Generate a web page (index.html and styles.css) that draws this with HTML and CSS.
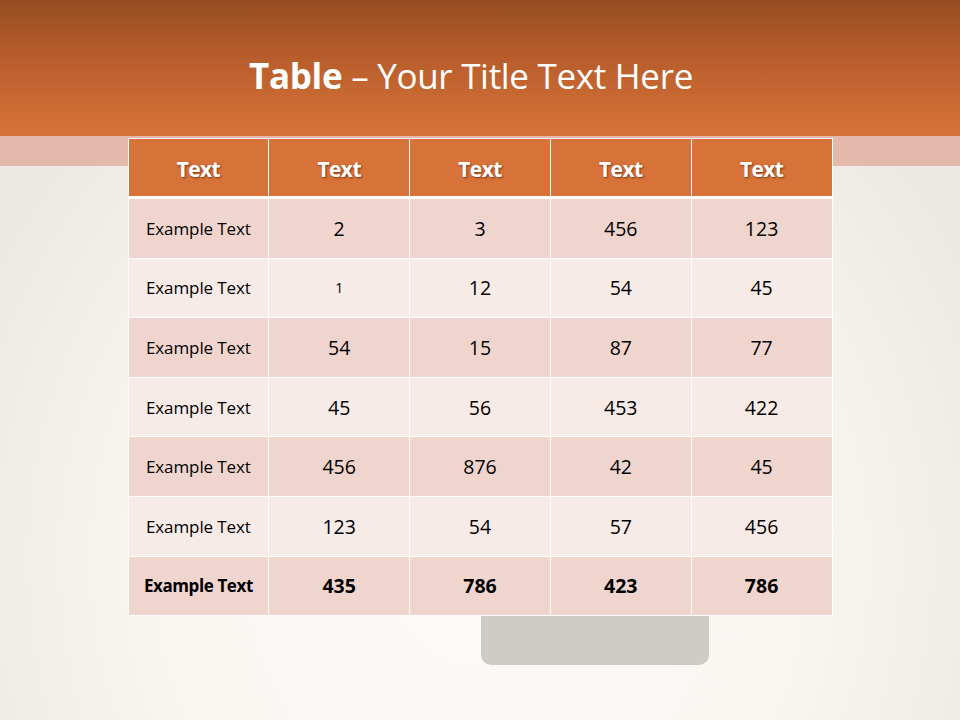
FILE: index.html
```html
<!DOCTYPE html>
<html>
<head>
<meta charset="utf-8">
<link rel="stylesheet" href="styles.css">
</head>
<body>
<div class="slide">
  <header class="title-area">
    <h1 class="title"><b>Table</b> – Your Title Text Here</h1>
  </header>
  <table class="data">
    <thead>
      <tr><th>Text</th><th>Text</th><th>Text</th><th>Text</th><th>Text</th></tr>
    </thead>
    <tbody>
      <tr class="odd"><td class="lbl">Example Text</td><td>2</td><td>3</td><td>456</td><td>123</td></tr>
      <tr class="even"><td class="lbl">Example Text</td><td class="small">1</td><td>12</td><td>54</td><td>45</td></tr>
      <tr class="odd"><td class="lbl">Example Text</td><td>54</td><td>15</td><td>87</td><td>77</td></tr>
      <tr class="even"><td class="lbl">Example Text</td><td>45</td><td>56</td><td>453</td><td>422</td></tr>
      <tr class="odd"><td class="lbl">Example Text</td><td>456</td><td>876</td><td>42</td><td>45</td></tr>
      <tr class="even"><td class="lbl">Example Text</td><td>123</td><td>54</td><td>57</td><td>456</td></tr>
      <tr class="odd total"><td class="lbl">Example Text</td><td>435</td><td>786</td><td>423</td><td>786</td></tr>
    </tbody>
  </table>
  <div class="tab-row"><div class="tab"></div></div>
</div>
</body>
</html>
```
FILE: styles.css
```css
html, body {
  margin: 0;
  padding: 0;
}
body {
  font-family: "Open Sans", "Noto Sans", sans-serif;
}
.slide {
  width: 960px;
  height: 720px;
  overflow: hidden;
  background:
    linear-gradient(to bottom, #964d22 0px, #b45b2a 50px, #d26f36 120px, #d5713a 136px, #e4b9ab 136px, #e4b8aa 166px, rgba(0,0,0,0) 166px),
    radial-gradient(ellipse 560px 620px at 50% 78%, #fdfaf7 0%, #faf6f2 55%, #ece8e3 100%);
}
.title-area {
  height: 138px;
  display: flex;
  align-items: center;
  justify-content: center;
  padding-right: 18px;
  box-sizing: border-box;
}
.title {
  margin: 0;
  padding-top: 12px;
  color: #ffffff;
  font-size: 35px;
  font-weight: 400;
  letter-spacing: -0.3px;
}
.title b {
  font-weight: 700;
}
.data {
  margin: 0 auto;
  width: 705px;
  border-collapse: collapse;
  table-layout: fixed;
}
.data th, .data td {
  border: 1px solid #ffffff;
  text-align: center;
  padding: 0;
  color: #000;
}
.data th {
  height: 54px;
  padding-top: 3px;
  background: #d77238;
  color: #ffffff;
  font-size: 21px;
  font-weight: 700;
  letter-spacing: -0.6px;
  text-shadow: 1px 1px 2px rgba(60, 20, 0, 0.6);
  border-bottom: 3px solid #ffffff;
}
.data td {
  height: 58.6px;
  font-size: 19.5px;
}
.data td.lbl {
  font-size: 17px;
  letter-spacing: -0.1px;
}
.data td.small {
  font-size: 14px;
}
.odd td {
  background: #f0d5cf;
}
.even td {
  background: #f7ebe7;
}
.total td {
  font-weight: 700;
}
.total td.lbl {
  letter-spacing: -0.4px;
}
.tab-row {
  width: 705px;
  margin: 0 auto;
  display: flex;
  padding-left: 353px;
  box-sizing: border-box;
}
.tab {
  width: 228px;
  height: 49px;
  background: #cfccc7;
  border-radius: 0 0 10px 10px;
}
```
